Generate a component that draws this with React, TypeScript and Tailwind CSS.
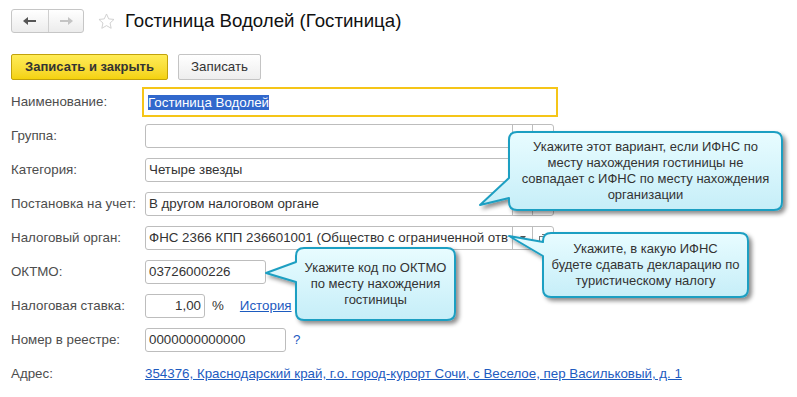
import React from "react";

// callout boxes: box, tail base on the left edge, tail tip
const callouts = [
  { x1: 509, y1: 132, x2: 782, y2: 210, tb1: 178, tb2: 198, tx: 480, ty: 205, lines: ["Укажите этот вариант, если ИФНС по", "месту нахождения гостиницы не", "совпадает с ИФНС по месту нахождения", "организации"] },
  { x1: 543, y1: 233, x2: 748, y2: 297, tb1: 242, tb2: 256, tx: 509, ty: 236, lines: ["Укажите, в какую ИФНС", "будете сдавать декларацию по", "туристическому налогу"] },
  { x1: 296, y1: 248, x2: 455, y2: 320, tb1: 262, tb2: 282, tx: 266, ty: 273, lines: ["Укажите код по ОКТМО", "по месту нахождения", "гостиницы"] },
];

function calloutPath(c: (typeof callouts)[number]) {
  const r = 8;
  const { x1, y1, x2, y2, tb1, tb2, tx, ty } = c;
  return `M${x1 + r},${y1} H${x2 - r} Q${x2},${y1} ${x2},${y1 + r} V${y2 - r} Q${x2},${y2} ${x2 - r},${y2} H${x1 + r} Q${x1},${y2} ${x1},${y2 - r} V${tb2} L${tx},${ty} L${x1},${tb1} V${y1 + r} Q${x1},${y1} ${x1 + r},${y1} Z`;
}

function Label({ children }: { children: React.ReactNode }) {
  return <div className="w-[134px] shrink-0 text-[13.33px] text-[#4d4d4d]">{children}</div>;
}

function ChoiceField({ value }: { value?: string }) {
  return (
    <div className="flex h-6 w-[409px] rounded-[3px] border border-[#bdbdbd] bg-white">
      <div className="flex-1 overflow-hidden whitespace-nowrap px-[3px] text-[13.33px] leading-[22px] text-[#333]">{value}</div>
      <div className="flex w-5 items-center justify-center border-l border-[#bdbdbd]">
        <svg width="6" height="4" viewBox="0 0 6 4">
          <path d="M0 0 H6 L3 3.5 Z" fill="#555" />
        </svg>
      </div>
      <div className="flex w-[21px] items-center justify-center border-l border-[#bdbdbd]">
        <svg width="9" height="9" viewBox="0 0 9 9">
          <rect x="0.5" y="2.5" width="6" height="6" fill="none" stroke="#777" />
          <path d="M3 0.5 H8.5 V6" fill="none" stroke="#777" />
        </svg>
      </div>
    </div>
  );
}

function Input({ value, className }: { value: string; className: string }) {
  return (
    <div className={`h-6 rounded-[3px] border border-[#bdbdbd] bg-white px-[3px] text-[13.33px] leading-[22px] text-[#333] ${className}`}>
      {value}
    </div>
  );
}

export default function App() {
  return (
    <div className="relative h-[397px] w-[797px] overflow-hidden bg-white pl-[11px] pt-[9px] font-['Liberation_Sans',sans-serif]">
      {/* header */}
      <div className="flex h-6 items-center">
        <div className="flex h-6 w-[73px] rounded-[3px] border border-[#c6c6c6] bg-gradient-to-b from-white to-[#ececec]">
          <div className="flex w-[37px] items-center justify-center border-r border-[#cfcfcf]">
            <svg width="14" height="8" viewBox="0 0 14 8">
              <path d="M0 4 L5 0 V3 H13 V5 H5 V8 Z" fill="#555" />
            </svg>
          </div>
          <div className="flex flex-1 items-center justify-center">
            <svg width="14" height="8" viewBox="0 0 14 8">
              <path d="M14 4 L9 0 V3 H1 V5 H9 V8 Z" fill="#c4c4c4" />
            </svg>
          </div>
        </div>
        <svg className="ml-[13px]" width="19" height="19" viewBox="0 0 24 24">
          <path
            d="M12 2.5 L14.8 8.7 L21.5 9.4 L16.5 13.9 L17.9 20.6 L12 17.2 L6.1 20.6 L7.5 13.9 L2.5 9.4 L9.2 8.7 Z"
            fill="none"
            stroke="#cfcfcf"
            strokeWidth="1.2"
            strokeLinejoin="round"
          />
        </svg>
        <div className="ml-[9px] text-[18.67px] leading-6 text-[#111]">Гостиница Водолей (Гостиница)</div>
      </div>

      {/* command bar */}
      <div className="mt-[21px] flex h-[26px] gap-[10px]">
        <button className="h-[26px] w-[157px] rounded-[2px] border border-[#c2a20c] bg-gradient-to-b from-[#ffec55] to-[#f4d20a] text-[13px] font-bold text-[#333]">
          Записать и закрыть
        </button>
        <button className="h-[26px] w-[83px] rounded-[2px] border border-[#c4c4c4] bg-gradient-to-b from-white to-[#eeeeee] text-[13.33px] text-[#333]">
          Записать
        </button>
      </div>

      {/* name */}
      <div className="mt-[7px] flex h-[30px] items-center">
        <div className="w-[131px] shrink-0 text-[13.33px] text-[#4d4d4d]">Наименование:</div>
        <div className="flex h-[30px] w-[416px] items-center border-2 border-[#f5c518] bg-white px-1">
          <span className="bg-[#3168cc] text-[13.33px] leading-[15px] text-white">Гостиница Водолей</span>
        </div>
      </div>

      {/* fields */}
      <div className="mt-[7px] flex flex-col gap-[10px]">
        <div className="flex h-6 items-center">
          <Label>Группа:</Label>
          <ChoiceField />
        </div>
        <div className="flex h-6 items-center">
          <Label>Категория:</Label>
          <ChoiceField value="Четыре звезды" />
        </div>
        <div className="flex h-6 items-center">
          <Label>Постановка на учет:</Label>
          <ChoiceField value="В другом налоговом органе" />
        </div>
        <div className="flex h-6 items-center">
          <Label>Налоговый орган:</Label>
          <ChoiceField value="ФНС 2366 КПП 236601001 (Общество с ограниченной отв" />
        </div>
        <div className="flex h-6 items-center">
          <Label>ОКТМО:</Label>
          <Input value="03726000226" className="w-[121px]" />
        </div>
        <div className="flex h-6 items-center">
          <Label>Налоговая ставка:</Label>
          <Input value="1,00" className="w-[60px] text-right" />
          <span className="ml-[7px] text-[13.33px] text-[#333]">%</span>
          <a className="ml-4 text-[13.33px] text-[#1d5bbf] underline">История</a>
        </div>
        <div className="flex h-6 items-center">
          <Label>Номер в реестре:</Label>
          <Input value="0000000000000" className="w-[141px]" />
          <span className="ml-[7px] text-[13.33px] text-[#1d5bbf]">?</span>
        </div>
        <div className="flex h-6 items-center">
          <Label>Адрес:</Label>
          <a className="whitespace-nowrap text-[13.33px] text-[#1d5bbf] underline">
            354376, Краснодарский край, г.о. город-курорт Сочи, с Веселое, пер Васильковый, д. 1
          </a>
        </div>
      </div>

      {/* callouts */}
      <svg className="pointer-events-none absolute left-0 top-0" width="797" height="397">
        <defs>
          <linearGradient id="cf" x1="0" y1="0" x2="0" y2="1">
            <stop offset="0" stopColor="#e8fcff" />
            <stop offset="1" stopColor="#c6eef8" />
          </linearGradient>
          <filter id="sh" x="-10%" y="-10%" width="130%" height="140%">
            <feDropShadow dx="3" dy="3" stdDeviation="2" floodColor="#000" floodOpacity="0.45" />
          </filter>
        </defs>
        {callouts.map((c, i) => (
          <path key={i} d={calloutPath(c)} fill="url(#cf)" stroke="#1f9fc2" strokeWidth="2" strokeLinejoin="round" filter="url(#sh)" />
        ))}
      </svg>
      {callouts.map((c, i) => (
        <div
          key={i}
          className="absolute flex flex-col items-center justify-center text-center text-[13px] leading-4 text-[#333]"
          style={{ left: c.x1, top: c.y1, width: c.x2 - c.x1, height: c.y2 - c.y1 }}
        >
          {c.lines.map((l) => (
            <div key={l} className="whitespace-nowrap">{l}</div>
          ))}
        </div>
      ))}
    </div>
  );
}
